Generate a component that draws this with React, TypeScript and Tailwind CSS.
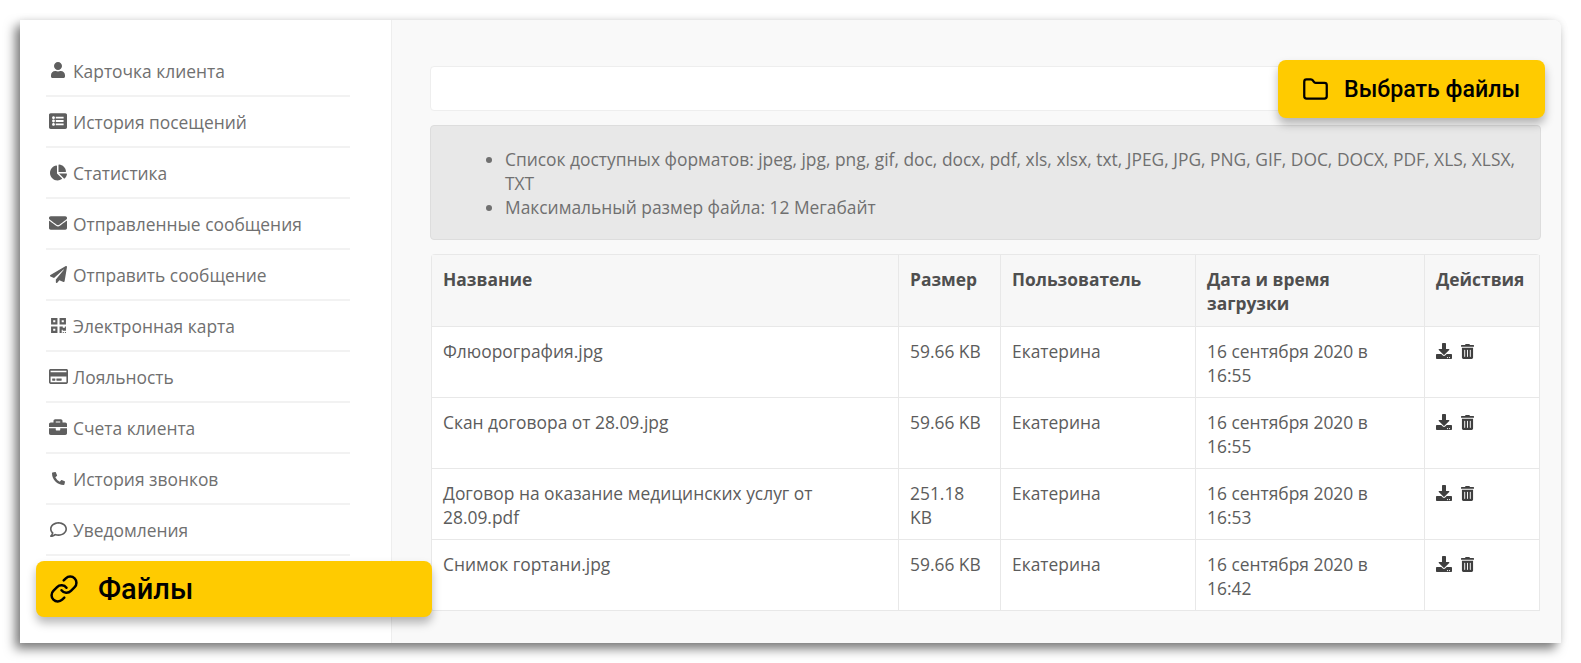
import React from "react";
import { Link, Folder } from "lucide-react";
import {
  FaUser, FaListAlt, FaChartPie, FaEnvelope, FaPaperPlane, FaQrcode,
  FaRegCreditCard, FaBriefcase, FaPhoneAlt, FaRegComment, FaDownload, FaTrashAlt,
} from "react-icons/fa";

const nav = [
  { label: "Карточка клиента", Icon: FaUser, size: 16 },
  { label: "История посещений", Icon: FaListAlt, size: 18 },
  { label: "Статистика", Icon: FaChartPie, size: 17 },
  { label: "Отправленные сообщения", Icon: FaEnvelope, size: 18 },
  { label: "Отправить сообщение", Icon: FaPaperPlane, size: 17 },
  { label: "Электронная карта", Icon: FaQrcode, size: 17 },
  { label: "Лояльность", Icon: FaRegCreditCard, size: 19 },
  { label: "Счета клиента", Icon: FaBriefcase, size: 18 },
  { label: "История звонков", Icon: FaPhoneAlt, size: 13 },
  { label: "Уведомления", Icon: FaRegComment, size: 17 },
];

const rows = [
  ["Флюорография.jpg", "59.66 KB", "Екатерина", "16 сентября 2020 в 16:55"],
  ["Скан договора от 28.09.jpg", "59.66 KB", "Екатерина", "16 сентября 2020 в 16:55"],
  ["Договор на оказание медицинских услуг от 28.09.pdf", "251.18 KB", "Екатерина", "16 сентября 2020 в 16:53"],
  ["Снимок гортани.jpg", "59.66 KB", "Екатерина", "16 сентября 2020 в 16:42"],
];

const th = "border-r border-b border-[#e8e8e8] px-[11px] pt-[12px] pb-0 text-left align-top font-bold text-[#4f4f4f]";
const td = "border-r border-b border-[#e8e8e8] px-[11px] pt-[12px] pb-0 align-top text-[#5c5c5c]";

export default function App() {
  return (
    <div className="h-[663px] w-[1581px] overflow-hidden bg-white pl-[20px] pr-[20px] pt-[20px] pb-[20px] font-['Open_Sans',sans-serif] text-[17.4px] leading-[24px] text-[#666]">
      <div className="relative flex h-[623px] w-[1541px] rounded-tr-lg rounded-br-sm bg-white shadow-[-5px_6px_11px_rgba(0,0,0,0.5),0_0_8px_rgba(0,0,0,0.08)]">
        <aside className="w-[372px] shrink-0 border-r border-[#eeeeee] bg-white pl-[26px] pt-[26px]">
          <ul className="w-[304px]">
            {nav.map(({ label, Icon, size }) => (
              <li key={label} className="flex h-[51px] items-center border-b-2 border-[#f2f2f2] pb-[1px] text-[#707070]">
                <span className="flex w-[27px] shrink-0 items-center justify-center pr-[3px] text-[#5f5f5f]">
                  <Icon style={{ width: size, height: size }} />
                </span>
                <span className="mt-[2px]">{label}</span>
              </li>
            ))}
          </ul>
        </aside>

        <main className="flex-1 rounded-tr-lg bg-[#f9f9f9] pl-[38px] pr-[20px] pt-[46px]">
          <div className="h-[45px] w-[1111px] rounded-sm border border-[#eeeeee] bg-white" />
          <div className="mt-[14px] h-[115px] w-[1111px] rounded border border-[#dddddd] bg-[#e8e8e8] pl-[55px] pr-[14px] pt-[21px] text-[#707070]">
            <ul className="list-disc pl-[19px]">
              <li>Список доступных форматов: jpeg, jpg, png, gif, doc, docx, pdf, xls, xlsx, txt, JPEG, JPG, PNG, GIF, DOC, DOCX, PDF, XLS, XLSX, TXT</li>
              <li>Максимальный размер файла: 12 Мегабайт</li>
            </ul>
          </div>
          <table className="mt-[14px] ml-[1px] w-[1108px] table-fixed border-separate border-spacing-0 rounded-sm border-t border-l border-[#e8e8e8] bg-white">
            <colgroup>
              <col className="w-[467px]" />
              <col className="w-[102px]" />
              <col className="w-[195px]" />
              <col className="w-[229px]" />
              <col className="w-[115px]" />
            </colgroup>
            <thead>
              <tr className="h-[72px] bg-[#f7f7f7]">
                <th className={th}>Название</th>
                <th className={th}>Размер</th>
                <th className={th}>Пользователь</th>
                <th className={th}>Дата и время загрузки</th>
                <th className={th}>Действия</th>
              </tr>
            </thead>
            <tbody>
              {rows.map((r) => (
                <tr key={r[0]} className="h-[71px]">
                  {r.map((c) => (
                    <td key={c} className={td}>{c}</td>
                  ))}
                  <td className={td}>
                    <div className="flex h-[24px] items-center gap-[9px] text-[#3f3f3f]">
                      <FaDownload className="h-[16px] w-[16px]" />
                      <FaTrashAlt className="h-[15px] w-[13px]" />
                    </div>
                  </td>
                </tr>
              ))}
            </tbody>
          </table>
        </main>

        <div className="absolute left-[1258px] top-[40px] flex h-[58px] w-[267px] items-center rounded-lg bg-[#ffcb00] pl-[24px] font-['Roboto',sans-serif] text-[23.2px] font-medium text-black shadow-[0_6px_10px_rgba(0,0,0,0.28)]">
          <Folder className="h-[27px] w-[27px]" strokeWidth={2} />
          <span className="ml-[15px]">Выбрать файлы</span>
        </div>
        <div className="absolute left-[16px] top-[541px] flex h-[56px] w-[396px] items-center rounded-lg bg-[#ffcb00] pl-[13px] font-['Roboto',sans-serif] text-[29px] font-medium text-black shadow-[0_6px_10px_rgba(0,0,0,0.28)]">
          <Link className="h-[30px] w-[30px]" strokeWidth={2} />
          <span className="ml-[19px]">Файлы</span>
        </div>
      </div>
    </div>
  );
}
